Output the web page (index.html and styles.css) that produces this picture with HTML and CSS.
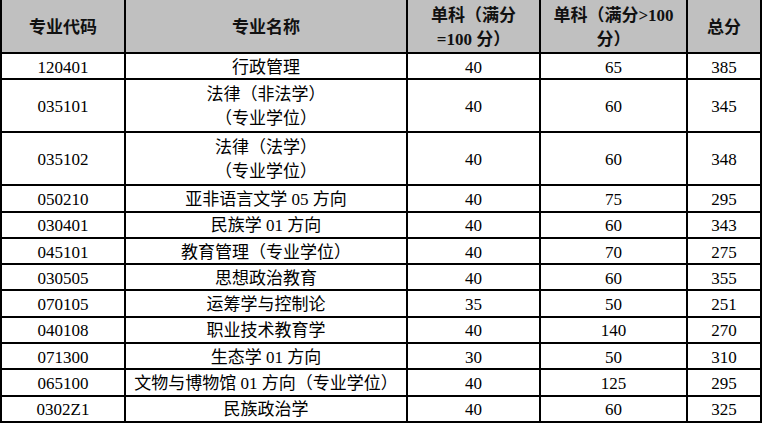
FILE: index.html
```html
<!DOCTYPE html>
<html lang="zh-CN">
<head>
<meta charset="utf-8">
<title>分数线</title>
<link rel="stylesheet" href="styles.css">
</head>
<body>
<table class="score">
  <colgroup>
    <col class="c-code"><col class="c-name"><col class="c-single"><col class="c-over"><col class="c-total">
  </colgroup>
  <thead>
    <tr class="head">
      <th>专业代码</th>
      <th>专业名称</th>
      <th>单科（满分<br>=100 分）</th>
      <th>单科（满分&gt;100<br>分）</th>
      <th>总分</th>
    </tr>
  </thead>
  <tbody>
    <tr class="r1"><td>120401</td><td>行政管理</td><td>40</td><td>65</td><td>385</td></tr>
    <tr class="r2"><td>035101</td><td>法律（非法学）<br>（专业学位）</td><td>40</td><td>60</td><td>345</td></tr>
    <tr class="r2"><td>035102</td><td>法律（法学）<br>（专业学位）</td><td>40</td><td>60</td><td>348</td></tr>
    <tr class="r1"><td>050210</td><td>亚非语言文学 05 方向</td><td>40</td><td>75</td><td>295</td></tr>
    <tr class="r1"><td>030401</td><td>民族学 01 方向</td><td>40</td><td>60</td><td>343</td></tr>
    <tr class="r1"><td>045101</td><td>教育管理（专业学位）</td><td>40</td><td>70</td><td>275</td></tr>
    <tr class="r1"><td>030505</td><td>思想政治教育</td><td>40</td><td>60</td><td>355</td></tr>
    <tr class="r1"><td>070105</td><td>运筹学与控制论</td><td>35</td><td>50</td><td>251</td></tr>
    <tr class="r1"><td>040108</td><td>职业技术教育学</td><td>40</td><td>140</td><td>270</td></tr>
    <tr class="r1"><td>071300</td><td>生态学 01 方向</td><td>30</td><td>50</td><td>310</td></tr>
    <tr class="r1"><td>065100</td><td>文物与博物馆 01 方向（专业学位）</td><td>40</td><td>125</td><td>295</td></tr>
    <tr class="r1"><td>0302Z1</td><td>民族政治学</td><td>40</td><td>60</td><td>325</td></tr>
  </tbody>
</table>
</body>
</html>
```
FILE: styles.css
```css
html, body {
  margin: 0;
  padding: 0;
  background: #ffffff;
}

.score {
  border-collapse: collapse;
  table-layout: fixed;
  width: 760px;
  font-family: "Liberation Serif", "Noto Sans CJK SC", serif;
  color: #000000;
  font-size: 17px;
}

.c-code { width: 124px; }
.c-name { width: 282px; }
.c-single { width: 133px; }
.c-over { width: 147px; }
.c-total { width: 74px; }

.score th,
.score td {
  border: 2px solid #000000;
  padding: 0;
  text-align: center;
  vertical-align: middle;
}

.score thead th {
  border-top: none;
  background: #c0c0c0;
  font-weight: bold;
  font-size: 17px;
  line-height: 24px;
  padding-top: 4px;
  height: 48px;
  color: #111111;
}

.r1 td {
  padding-top: 3px;
  height: 21.3px;
  line-height: 14px;
}

.r2 td {
  padding-top: 3px;
  height: 47px;
  line-height: 24px;
}
```
